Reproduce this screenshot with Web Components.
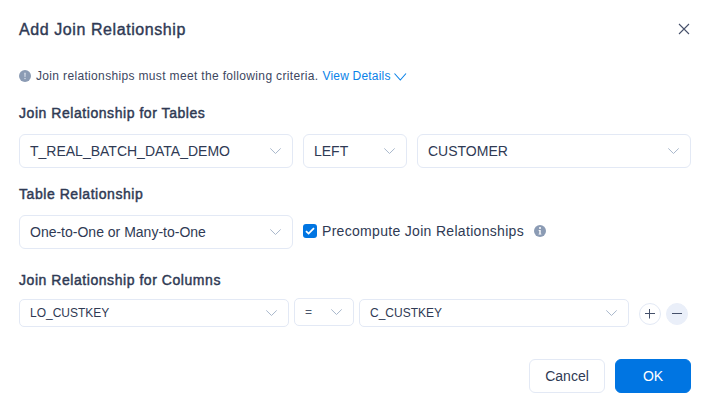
<!DOCTYPE html>
<html lang="en">
<head>
<meta charset="utf-8">
<title>Add Join Relationship</title>
<style>
body{margin:0;background:#fff;font-family:"Liberation Sans",Arial,sans-serif;color:#2f3a54}
</style>
</head>
<body>
<join-dialog></join-dialog>
<script>
const define = (name, html) => {
  const template = document.createElement('template');
  template.innerHTML = html;
  customElements.define(name, class extends HTMLElement {
    constructor() {
      super();
      this.attachShadow({mode: 'open'}).append(template.content.cloneNode(true));
    }
  });
};

define('ui-select', `
<style>
:host{display:flex;box-sizing:border-box;width:var(--w);height:34px;align-items:center;justify-content:space-between;border:1px solid #e3e9f5;border-radius:6px;padding:0 10px;font-size:14px;line-height:16px;white-space:nowrap}
:host([small]){height:28px;font-size:12px;line-height:14px;border-radius:5px}
svg{display:block;width:14px;height:14px;flex:none}
</style>
<span><slot></slot></span>
<svg viewBox="0 0 14 14" fill="none" stroke="#a9b8cc"><path d="M2.3 4.4 7.5 9.5 12.7 4.4"/></svg>`);

define('ui-heading', `
<style>
:host{display:block;font-size:14px;line-height:16px;white-space:nowrap;letter-spacing:.55px;-webkit-text-stroke:.45px currentColor}
</style>
<slot></slot>`);

define('ui-badge', `
<style>
:host{display:block;width:12px;height:12px;flex:none}
svg{display:block}
.info{display:none}
:host([info]) .info{display:block}
:host([info]) .alert{display:none}
</style>
<svg width="12" height="12" viewBox="0 0 12 12">
<circle cx="6" cy="6" r="6" fill="#8b9bb4"/>
<g class="alert" fill="#d3dbe7"><path d="M5.2 2.8h1.6l-.3 4.2h-1z"/><circle cx="6" cy="8.5" r=".75"/></g>
<g class="info" fill="#fff"><circle cx="6" cy="3" r="1"/><path d="M4.6 4.9h2.1v3.8h.7v.9H4.6v-.9h.7V5.8h-.7z"/></g>
</svg>`);

define('ui-check', `
<style>
:host{display:flex;align-items:center;font-size:14px;line-height:16px;letter-spacing:.31px;white-space:nowrap;gap:5px}
svg{display:block}
</style>
<svg width="14" height="14" viewBox="0 0 14 14"><rect width="14" height="14" rx="3" fill="#0075e2"/><path d="m3 7.1 2.6 2.5L11 4.2" fill="none" stroke="#fff" stroke-width="1.8"/></svg>
<span><slot></slot></span>`);

define('ui-round', `
<style>
:host{display:flex;box-sizing:border-box;width:22px;height:22px;border:1px solid #e3e9f5;border-radius:50%;align-items:center;justify-content:center}
:host([minus]){background:#eaeff9;border-color:#eaeff9}
:host([minus]) .v{display:none}
svg{display:block}
</style>
<svg width="12" height="12" viewBox="0 0 12 12" stroke="#45506a" stroke-width="1"><path d="M1 5.5H11"/><path class="v" d="M5.5 1V10.5"/></svg>`);

define('ui-button', `
<style>
:host{display:flex;box-sizing:border-box;width:76px;height:34px;border:1px solid #e3e9f5;border-radius:6px;align-items:center;justify-content:center;font-size:14px;line-height:16px}
:host([primary]){background:#0075e2;border-color:#0075e2;color:#fff}
</style>
<slot></slot>`);

define('join-dialog', `
<style>
:host{display:flex;flex-direction:column;box-sizing:border-box;width:711px;height:411px;padding:20px 20px 0 19px;background:#fff}
header{display:flex;justify-content:space-between;align-items:center;height:19px}
h1{margin:0;font-size:16px;font-weight:400;line-height:18px;letter-spacing:.58px;-webkit-text-stroke:.4px currentColor;white-space:nowrap}
header svg{margin-right:1px;margin-top:-1px}
.note{display:flex;align-items:center;height:16px;margin-top:29px;margin-bottom:21px;font-size:12px;line-height:14px;white-space:nowrap;color:#3d475f}
.note ui-badge{margin:-1px 5px 0 0}
.note span{letter-spacing:.34px}
.note a{color:#0a82e8;margin-left:4px;letter-spacing:.2px}
.note svg{margin:2px 0 0 2px}
.row{display:flex;gap:10px;margin-top:13px;margin-bottom:18px}
.row.mid{align-items:center;margin-bottom:23px}
.mid ui-check{margin-bottom:2px}
.mid ui-badge{margin:-2px 0 0 0}
.cols{display:flex;gap:5px;margin-top:10px;align-items:flex-start}
.cols ui-select{margin-top:1px}
.cols .op{margin-top:0}
.cols .plus{margin:5px 0 0 5px}
.cols .minus{margin-top:5px}
.op{color:#4d586e}
footer{display:flex;justify-content:flex-end;gap:10px;margin-top:32px}
</style>
<header><h1>Add Join Relationship</h1>
<svg width="12" height="12" viewBox="0 0 12 12" fill="none" stroke="#47516b" stroke-width="1.1"><path d="m1 1 10 10M11 1 1 11"/></svg></header>
<div class="note"><ui-badge></ui-badge><span>Join relationships must meet the following criteria.</span><a>View Details</a>
<svg width="14" height="10" viewBox="0 0 14 10" fill="none" stroke="#0a82e8" stroke-width="1.1"><path d="M1.5 1.5 7.3 8 13 1.5"/></svg></div>
<ui-heading>Join Relationship for Tables</ui-heading>
<div class="row"><ui-select style="--w:274px">T_REAL_BATCH_DATA_DEMO</ui-select><ui-select style="--w:104px">LEFT</ui-select><ui-select style="--w:274px">CUSTOMER</ui-select></div>
<ui-heading>Table Relationship</ui-heading>
<div class="row mid"><ui-select style="--w:274px">One-to-One or Many-to-One</ui-select><ui-check>Precompute Join Relationships</ui-check><ui-badge info></ui-badge></div>
<ui-heading>Join Relationship for Columns</ui-heading>
<div class="cols"><ui-select small style="--w:270px">LO_CUSTKEY</ui-select><ui-select small class="op" style="--w:60px">=</ui-select><ui-select small style="--w:270px">C_CUSTKEY</ui-select><ui-round class="plus"></ui-round><ui-round minus class="minus"></ui-round></div>
<footer><ui-button>Cancel</ui-button><ui-button primary>OK</ui-button></footer>`);
</script>
</body>
</html>
